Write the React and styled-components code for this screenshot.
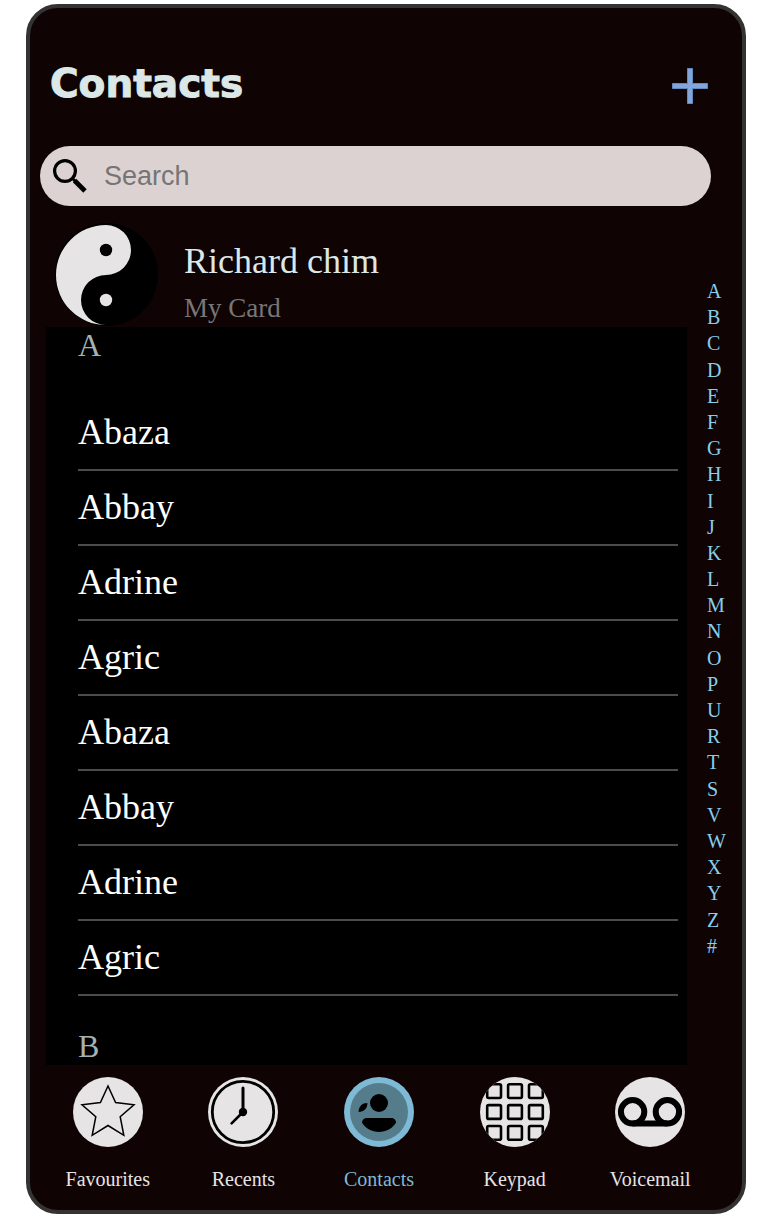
import React from "react";
import styled, { createGlobalStyle } from "styled-components";

const GlobalStyle = createGlobalStyle`
  *, *::before, *::after { box-sizing: border-box; }
  body {
    margin: 0;
    background: #fff;
    font-family: "Liberation Serif", "Times New Roman", serif;
  }
`;

const Phone = styled.div`
  max-width: 720px;
  margin: 4px 28px 8px 26px;
  border: 4px solid #333333;
  border-radius: 32px;
  background: #100304;
  overflow: hidden;
`;

const Header = styled.header`
  display: flex;
  align-items: center;
  justify-content: space-between;
  padding: 48px 34px 30px 20px;
`;

const Title = styled.h1`
  margin: 0;
  padding-bottom: 4px;
  font: bold 39px/56px Verdana, "DejaVu Sans", sans-serif;
  color: #dbe8e7;
  -webkit-text-stroke: 1px #dbe8e7;
`;

const AddButton = styled.button`
  display: flex;
  padding: 0;
  border: 0;
  background: none;
  cursor: pointer;
`;

const SearchBar = styled.label`
  display: flex;
  align-items: center;
  gap: 16px;
  height: 60px;
  margin: 0 31px 0 10px;
  padding: 0 30px 0 12px;
  border-radius: 30px;
  background: #dcd2d1;
`;

const SearchInput = styled.input.attrs({ type: "search" })`
  flex: 1;
  min-width: 0;
  padding: 0;
  border: 0;
  outline: 0;
  appearance: none;
  background: transparent;
  font: 27px/32px Arial, "Liberation Sans", sans-serif;
  color: #222;
  &::placeholder { color: #757575; opacity: 1; }
`;

const Body = styled.div`
  display: flex;
  gap: 20px;
`;

const Main = styled.main`
  flex: 1;
  min-width: 0;
  padding-left: 16px;
`;

const MyCard = styled.section`
  display: flex;
  align-items: center;
  gap: 26px;
  padding: 16px 0 1px 8px;
`;

const CardText = styled.div`
  padding-top: 16px;
`;

const CardName = styled.h2`
  margin: 0;
  font-size: 36px;
  font-weight: 400;
  line-height: 46px;
  color: #dbe8e9;
`;

const CardLabel = styled.p`
  margin: 0;
  padding-top: 6px;
  font-size: 27px;
  line-height: 36px;
  color: #777777;
`;

const Directory = styled.div`
  padding: 0 9px 0 32px;
  background: #000;
`;

const Letter = styled.h3`
  margin: 0;
  font-size: 32px;
  font-weight: 400;
  line-height: 37px;
  color: #a6b1b1;
`;

const ContactList = styled.ul`
  margin: 0;
  padding: 32px 0;
  list-style: none;
`;

const ContactRow = styled.li`
  border-bottom: 2px solid #4c4c4c;
`;

const ContactLink = styled.a`
  display: block;
  font-size: 36px;
  line-height: 73px;
  color: #fff;
  text-decoration: none;
`;

const Index = styled.nav`
  display: flex;
  flex-direction: column;
  justify-content: space-between;
  width: 35px;
  padding: 74px 0 107px;
`;

const IndexLink = styled.a`
  font-size: 20px;
  line-height: 23px;
  color: #87ceeb;
  text-decoration: none;
`;

const TabBar = styled.nav`
  display: grid;
  grid-template-columns: repeat(5, 1fr);
  padding: 12px 24px 19px 10px;
`;

const Tab = styled.a`
  display: flex;
  flex-direction: column;
  align-items: center;
  gap: 20px;
  font-size: 20px;
  line-height: 24px;
  color: ${(p) => (p.$active ? "#7eb9d5" : "#e6e4e5")};
  text-decoration: none;
`;

const TabIcon = styled.span`
  display: flex;
  width: 70px;
  height: 70px;
  border-radius: 50%;
  overflow: hidden;
  background: ${(p) => (p.$active ? "#7eb9d5" : "#e6e4e5")};
`;

const Glyph = ({ children }) => (
  <svg width="70" height="70" viewBox="0 0 70 70" fill="none" stroke="#000" aria-hidden="true">
    {children}
  </svg>
);

const StarIcon = () => (
  <Glyph>
    <path
      strokeWidth="1.5"
      d="M35 9L42.6 25.5L61 27.7L47.2 39.7L50.8 58.3L35 48.5L19.2 58.3L22.8 39.7L9 27.7L27.4 25.5Z"
    />
  </Glyph>
);

const ClockIcon = () => (
  <Glyph>
    <circle cx="35" cy="35" r="30.7" strokeWidth="2.8" />
    <path d="M35 35V11" strokeWidth="3" strokeLinecap="round" />
    <path d="M35 35L23.6 46.4" strokeWidth="2.6" strokeLinecap="round" />
    <circle cx="35" cy="35" r="4.2" fill="#000" stroke="none" />
  </Glyph>
);

const PersonIcon = () => (
  <Glyph>
    <g stroke="none" fill="#000">
      <circle cx="35" cy="35" r="29" fill="#557c8a" />
      <circle cx="35" cy="26" r="9" />
      <path d="M23.4 26C18 26 14.6 29.4 14.6 35C20 35 23.4 31.4 23.4 26Z" />
      <path d="M23 41H47C50 41 52 43 52 45.5C48.5 51.5 42 55 35 55C28 55 21.5 51.5 18 45.5C18 43 20 41 23 41Z" />
    </g>
  </Glyph>
);

const KEY_STEPS = [7.2, 28.1, 49];

const KeypadIcon = () => (
  <Glyph>
    {KEY_STEPS.map((y) =>
      KEY_STEPS.map((x) => (
        <rect key={`${x}-${y}`} x={x} y={y} width="13.8" height="13.8" rx="1.5" strokeWidth="2.6" />
      ))
    )}
  </Glyph>
);

const VoicemailIcon = () => (
  <Glyph>
    <g strokeWidth="6">
      <circle cx="17.6" cy="34.8" r="11.7" />
      <circle cx="52.4" cy="34.8" r="11.7" />
      <path d="M17.6 46.5H52.4" />
    </g>
  </Glyph>
);

const SearchIcon = () => (
  <svg width="36" height="36" viewBox="0 0 36 36" fill="none" stroke="#000" aria-hidden="true">
    <circle cx="13" cy="13" r="10.4" strokeWidth="3.2" />
    <path d="M20.3 20.3L24 24" strokeWidth="2.8" />
    <path d="M22.5 22.5L33 33" strokeWidth="4.8" />
  </svg>
);

const PlusIcon = () => (
  <svg width="36" height="36" viewBox="0 0 36 36" aria-hidden="true">
    <path
      d="M15.5 .5H20.5V15.5H35.5V20.5H20.5V35.5H15.5V20.5H.5V15.5H15.5Z"
      fill="#82a6da"
      stroke="#6089c0"
    />
  </svg>
);

const YinYang = () => (
  <svg width="104" height="104" viewBox="0 0 104 104" role="img" aria-label="Yin and yang">
    <circle cx="52.5" cy="52.5" r="51.5" fill="#000" />
    <path d="M52 3A25 25 0 0 1 52 53A25 25 0 0 0 52 103A50 50 0 0 1 52 3Z" fill="#e6e4e5" />
    <circle cx="52" cy="28" r="6.2" fill="#000" />
    <circle cx="52" cy="78" r="6.2" fill="#e6e4e5" />
  </svg>
);

const CONTACTS = ["Abaza", "Abbay", "Adrine", "Agric", "Abaza", "Abbay", "Adrine", "Agric"];
const LETTERS = [..."ABCDEFGHIJKLMNOPURTSVWXYZ#"];
const TABS = [
  { label: "Favourites", Icon: StarIcon },
  { label: "Recents", Icon: ClockIcon },
  { label: "Contacts", Icon: PersonIcon, active: true },
  { label: "Keypad", Icon: KeypadIcon },
  { label: "Voicemail", Icon: VoicemailIcon },
];

export default function App() {
  return (
    <>
      <GlobalStyle />
      <Phone>
        <Header>
          <Title>Contacts</Title>
          <AddButton type="button" aria-label="Add contact">
            <PlusIcon />
          </AddButton>
        </Header>
        <SearchBar>
          <SearchIcon />
          <SearchInput placeholder="Search" aria-label="Search" />
        </SearchBar>
        <Body>
          <Main>
            <MyCard>
              <YinYang />
              <CardText>
                <CardName>Richard chim</CardName>
                <CardLabel>My Card</CardLabel>
              </CardText>
            </MyCard>
            <Directory>
              <Letter id="letter-A">A</Letter>
              <ContactList>
                {CONTACTS.map((name, i) => (
                  <ContactRow key={i}>
                    <ContactLink href={`#contact-${i}`}>{name}</ContactLink>
                  </ContactRow>
                ))}
              </ContactList>
              <Letter id="letter-B">B</Letter>
            </Directory>
          </Main>
          <Index aria-label="Alphabetical index">
            {LETTERS.map((letter) => (
              <IndexLink key={letter} href={`#letter-${letter}`}>
                {letter}
              </IndexLink>
            ))}
          </Index>
        </Body>
        <TabBar aria-label="Main">
          {TABS.map(({ label, Icon, active }) => (
            <Tab key={label} href={`#${label.toLowerCase()}`} $active={active} aria-current={active ? "page" : undefined}>
              <TabIcon $active={active}>
                <Icon />
              </TabIcon>
              {label}
            </Tab>
          ))}
        </TabBar>
      </Phone>
    </>
  );
}
